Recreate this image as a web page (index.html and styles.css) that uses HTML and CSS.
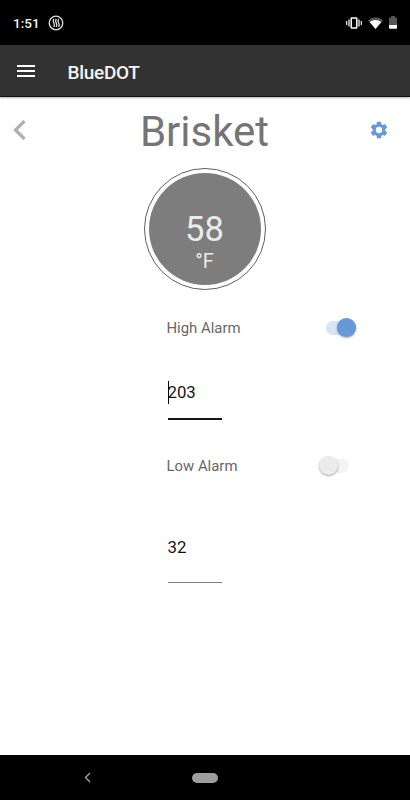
FILE: index.html
```html
<!DOCTYPE html>
<html lang="en">
<head>
    <meta charset="UTF-8">
    <meta name="viewport" content="width=device-width, initial-scale=1.0">
    <link rel="stylesheet" href="styles.css">
    <title>BlueDOT</title>
</head>
<body>
    <div class="status-bar">
        <span class="time">1:51</span>
        <svg class="heat-icon" width="16" height="16" viewBox="0 0 16 16" fill="none" stroke="#ddd">
            <circle cx="8" cy="8" r="6.8" stroke-width="1.3"/>
            <path d="M5.8 3.800q-1.200 2 0 4t0 4.200M8.200 3.800q-1.200 2 0 4t0 4.200M10.600 3.800q-1.200 2 0 4t0 4.200" stroke-width="1.3"/>
        </svg>
        <div class="status-icons">
            <svg width="16" height="12" viewBox="0 0 16 12">
                <path d="M.6 4v4M3 2.500v7M13 2.500v7M15.400 4v4" stroke="#ddd" stroke-width="1.400"/>
                <rect x="5.200" y="1" width="5.600" height="10" rx=".6" fill="none" stroke="#fff" stroke-width="1.500"/>
            </svg>
            <svg class="wifi" width="15" height="12" viewBox="0 0 15 12">
                <path d="M0 3.200Q7.500-2.600 15 3.200L7.500 12z" fill="#555"/>
                <path d="M1.700 5Q7.500 .8 13.300 5L7.500 12z" fill="#fff"/>
            </svg>
            <svg class="battery" width="8" height="13" viewBox="0 0 8 13">
                <path d="M2 0h4v1.500h1.300q.7 0 .7.700V9H0V2.200q0-.7.700-.7H2z" fill="#555"/>
                <path d="M0 9h8v3q0 .8-.8.800H.8Q0 12.800 0 12z" fill="#fff"/>
            </svg>
        </div>
    </div>

    <div class="app-bar">
        <div class="menu">
            <span></span>
            <span></span>
            <span></span>
        </div>
        <div class="app-name">BlueDOT</div>
    </div>

    <div class="content">
        <div class="probe-header">
            <svg class="back" width="14" height="22" viewBox="0 0 14 22">
                <path d="M11.500 2 2.500 11l9 9" fill="none" stroke="#b0b0b0" stroke-width="3.200"/>
            </svg>
            <h1>Brisket</h1>
            <svg class="settings" width="20" height="20" viewBox="0 0 24 24">
                <path fill="#6699d8" d="M19.430 12.980c.04-.32.070-.64.070-.98s-.03-.66-.07-.98l2.110-1.650c.19-.15.240-.42.120-.64l-2-3.460c-.12-.22-.39-.3-.61-.22l-2.490 1c-.52-.4-1.080-.73-1.690-.98l-.38-2.650C14.460 2.180 14.250 2 14 2h-4c-.25 0-.46.180-.49.420l-.38 2.650c-.61.250-1.170.590-1.690.980l-2.490-1c-.23-.09-.49 0-.61.220l-2 3.460c-.13.220-.07.490.12.640l2.110 1.650c-.04.320-.07.650-.07.980s.03.660.07.980l-2.110 1.650c-.19.150-.24.420-.12.640l2 3.460c.12.220.39.300.61.220l2.490-1c.52.400 1.080.730 1.690.980l.38 2.650c.03.240.24.420.49.420h4c.25 0 .46-.18.490-.42l.38-2.650c.61-.25 1.170-.59 1.690-.98l2.490 1c.23.090.49 0 .61-.22l2-3.460c.12-.22.070-.49-.12-.64l-2.110-1.650zM12 15.800a3.800 3.800 0 1 1 0-7.600 3.800 3.800 0 0 1 0 7.600z"/>
            </svg>
        </div>

        <div class="gauge">
            <div class="reading">
                <div class="degrees">58</div>
                <div class="unit">°F</div>
            </div>
        </div>

        <div class="alarm high">
            <span class="alarm-label">High Alarm</span>
            <div class="switch on"></div>
        </div>
        <div class="field focused">203</div>

        <div class="alarm low">
            <span class="alarm-label">Low Alarm</span>
            <div class="switch"></div>
        </div>
        <div class="field low-field">32</div>
    </div>

    <div class="nav-bar">
        <svg class="nav-back" width="8" height="11" viewBox="0 0 8 11">
            <path d="M6 1 1.500 5.500 6 10" fill="none" stroke="#aaa" stroke-width="1.300"/>
        </svg>
        <div class="nav-home"></div>
    </div>
</body>
</html>
```

FILE: styles.css
```css
* {
    box-sizing: border-box;
}

body {
    font-family: Roboto, "Liberation Sans", sans-serif;
    background-color: #fff;
    margin: 0;
    height: 800px;
    display: flex;
    flex-direction: column;
    overflow: hidden;
}

.status-bar {
    background-color: #000;
    color: #f4f4f4;
    height: 45px;
    display: flex;
    align-items: center;
    padding: 0 13px;
}

.time {
    font-size: 13.5px;
    font-weight: 500;
    width: 35px;
}

.status-icons {
    margin-left: auto;
    display: flex;
    align-items: center;
}

.wifi {
    margin-left: 6px;
}

.battery {
    margin-left: 6px;
}

.app-bar {
    background-color: #323232;
    height: 52px;
    display: flex;
    align-items: center;
    padding-left: 17px;
    border-bottom: 1px solid #111;
    box-shadow: 0 1px 2px rgba(0, 0, 0, 0.3);
    z-index: 1;
}

.menu {
    width: 18px;
    height: 12px;
    display: flex;
    flex-direction: column;
    justify-content: space-between;
}

.menu span {
    height: 2px;
    background-color: #fff;
}

.app-name {
    color: #f4f4f4;
    font-size: 19px;
    font-weight: 500;
    letter-spacing: -0.3px;
    margin-left: 32.5px;
    margin-top: 3px;
}

.content {
    flex: 1;
}

.probe-header {
    height: 70px;
    display: flex;
    align-items: center;
    justify-content: space-between;
    padding: 0 21px 0 13px;
}

.back {
    margin-top: -5px;
}

.settings {
    margin-top: -4px;
}

h1 {
    color: #757575;
    font-size: 42px;
    font-weight: 400;
    line-height: 50px;
    margin: 0 0 0 13px;
}

.gauge {
    width: 122px;
    height: 122px;
    margin: 1px auto 0 144px;
    padding: 3.7px;
    border: 1.3px solid #606060;
    border-radius: 50%;
}

.reading {
    height: 100%;
    border-radius: 50%;
    background-color: #7d7d7d;
    color: #ebebeb;
    text-align: center;
    padding-top: 36px;
}

.degrees {
    font-size: 34.5px;
    line-height: 40px;
    margin-left: -1px;
}

.unit {
    font-size: 20px;
    line-height: 24px;
    margin-left: -1px;
}

.alarm {
    display: flex;
    align-items: center;
    height: 20px;
    margin-left: 166.5px;
}

.high {
    margin-top: 28px;
}

.low {
    margin-top: 36px;
}

.alarm-label {
    color: #686868;
    font-size: 14.9px;
    width: 159.5px;
}

.low .alarm-label {
    width: 152px;
}

.switch {
    width: 30px;
    height: 14px;
    margin-top: -1px;
    border-radius: 7px;
    background-color: #f4f4f4;
    display: flex;
    align-items: center;
}

.switch::before {
    content: "";
    flex: none;
    width: 19px;
    height: 19px;
    border-radius: 50%;
    background-color: #ebebeb;
    box-shadow: 0 1px 2px rgba(0, 0, 0, 0.35);
}

.switch.on {
    background-color: #d7e4f5;
    justify-content: flex-end;
}

.switch.on::before {
    background-color: #6699d8;
}

.field {
    width: 54px;
    height: 50px;
    margin: 32px 0 0 167.5px;
    padding-top: 10px;
    color: #151515;
    font-size: 16.8px;
    line-height: 25px;
    border-bottom: 1px solid #808080;
    position: relative;
}

.focused {
    border-bottom: 2px solid #151515;
}

/* text cursor */
.focused::before {
    content: "";
    position: absolute;
    left: 0;
    top: 11px;
    width: 1px;
    height: 23px;
    background-color: #000;
}

.low-field {
    height: 58px;
    margin-top: 49px;
}

.nav-bar {
    background-color: #000;
    height: 45px;
    display: flex;
    align-items: center;
    padding-left: 84px;
}

.nav-home {
    width: 26px;
    height: 10px;
    border-radius: 5px;
    background-color: #9e9e9e;
    margin-left: 100px;
}
```
